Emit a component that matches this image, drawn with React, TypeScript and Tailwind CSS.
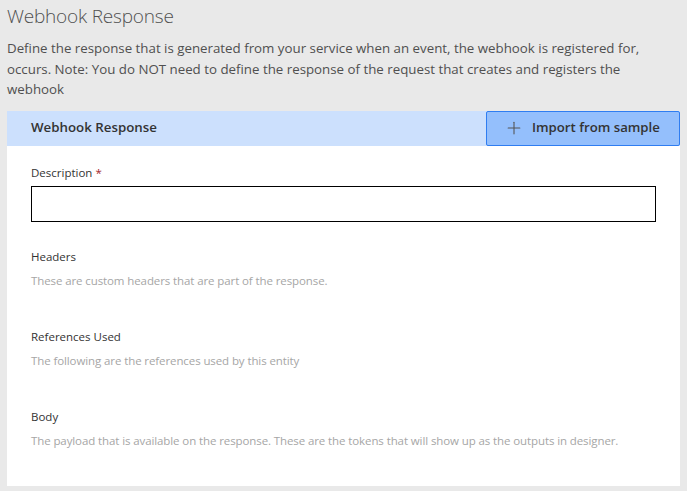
import { Plus } from "lucide-react";

const font = { fontFamily: "'Open Sans', 'Noto Sans', sans-serif" };

type Section = { label: string; hint: string };

const sections: Section[] = [
  { label: "Headers", hint: "These are custom headers that are part of the response." },
  { label: "References Used", hint: "The following are the references used by this entity" },
  {
    label: "Body",
    hint: "The payload that is available on the response. These are the tokens that will show up as the outputs in designer.",
  },
];

export default function App() {
  return (
    <div className="w-[687px] h-[491px] overflow-hidden bg-[#e9e9e9] px-[7px]" style={font}>
      <h1 className="pt-[2px] text-[19px] leading-[28px] font-light text-[#505050] tracking-[-0.2px]">
        Webhook Response
      </h1>
      <p className="mt-[8px] text-[13.3px] leading-[20.5px] text-[#505050] pr-[20px]">
        Define the response that is generated from your service when an event, the webhook is registered for,
        occurs. Note: You do NOT need to define the response of the request that creates and registers the
        webhook
      </p>

      <div className="mt-[11px] h-[375px] bg-white">
        {/* header band */}
        <div className="flex h-[35px] items-stretch bg-[#cce0fd]">
          <div className="flex flex-1 items-center pl-[24px] text-[13.3px] font-semibold text-[#333]">
            Webhook Response
          </div>
          <button className="flex w-[194px] items-center gap-[8px] rounded-[2px] border border-[#2f7df1] bg-[#94bffc] pl-[17px] text-[13.2px] font-semibold text-[#333]">
            <Plus className="h-[20px] w-[20px] text-[#555]" strokeWidth={1.3} />
            Import from sample
          </button>
        </div>

        <div className="px-[24px]">
          <div className="pt-[19px] text-[11.5px] leading-[16px] text-[#333]">
            Description <span className="text-[#a4262c]">*</span>
          </div>
          <input className="mt-[5px] block h-[36px] w-[625px] border border-black bg-white outline-none" />

          {sections.map((s, i) => (
            <div key={s.label} className={i === 0 ? "mt-[27px]" : "mt-[40px]"}>
              <div className="text-[11.5px] leading-[16px] text-[#333]">{s.label}</div>
              <div className="mt-[8px] text-[11.5px] leading-[16px] text-[#a6a6a6] tracking-[-0.1px]">{s.hint}</div>
            </div>
          ))}
        </div>
      </div>
    </div>
  );
}
